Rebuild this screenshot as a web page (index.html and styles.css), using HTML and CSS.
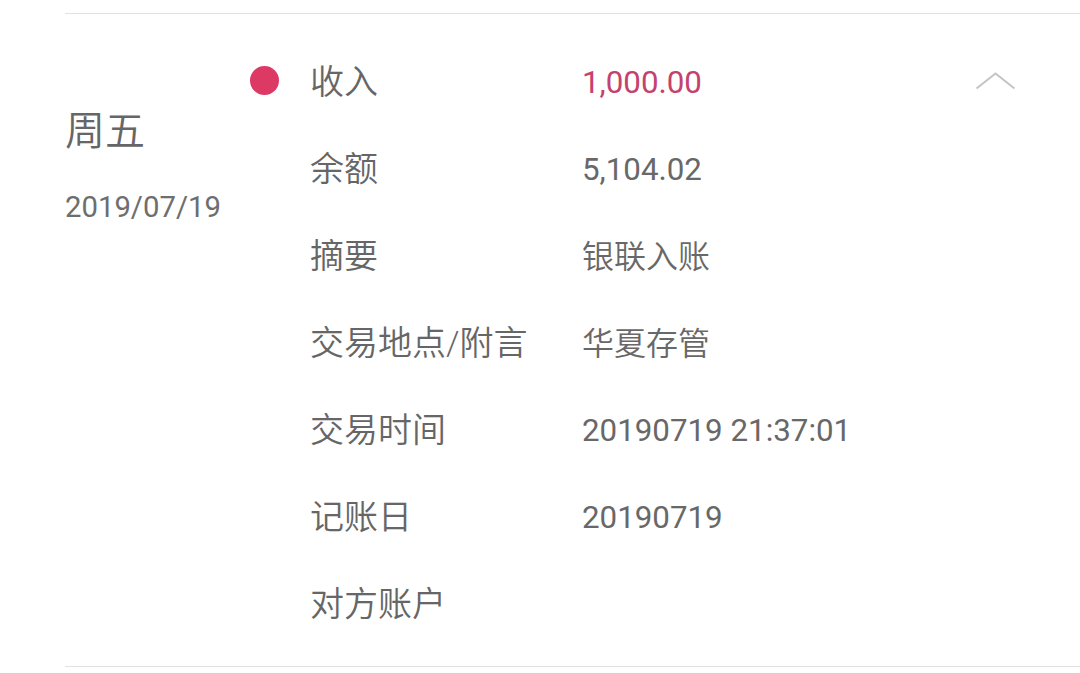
FILE: index.html
```html
<!DOCTYPE html>
<html lang="zh-CN">
<head>
<meta charset="utf-8">
<link rel="stylesheet" href="styles.css">
</head>
<body>
<div class="list">
  <div class="divider"></div>
  <div class="item">
    <div class="date-col">
      <div class="weekday">周五</div>
      <div class="date">2019/07/19</div>
    </div>
    <div class="detail">
      <div class="row">
        <span class="dot"></span>
        <span class="label">收入</span>
        <span class="value num income">1,000.00</span>
      </div>
      <div class="row">
        <span class="dot-space"></span>
        <span class="label">余额</span>
        <span class="value num">5,104.02</span>
      </div>
      <div class="row">
        <span class="dot-space"></span>
        <span class="label">摘要</span>
        <span class="value">银联入账</span>
      </div>
      <div class="row">
        <span class="dot-space"></span>
        <span class="label">交易地点/附言</span>
        <span class="value">华夏存管</span>
      </div>
      <div class="row">
        <span class="dot-space"></span>
        <span class="label">交易时间</span>
        <span class="value num">20190719 21:37:01</span>
      </div>
      <div class="row">
        <span class="dot-space"></span>
        <span class="label">记账日</span>
        <span class="value num">20190719</span>
      </div>
      <div class="row">
        <span class="dot-space"></span>
        <span class="label">对方账户</span>
        <span class="value"></span>
      </div>
    </div>
    <div class="chevron">
      <svg width="41" height="18" viewBox="0 0 41 18" aria-hidden="true">
        <polyline points="1.5,16.5 20.5,1.5 39.5,16.5" fill="none" stroke="#c4c4c4" stroke-width="2"/>
      </svg>
    </div>
  </div>
  <div class="divider bottom"></div>
</div>
</body>
</html>
```

FILE: styles.css
```css
html, body {
  margin: 0;
  padding: 0;
  background: #ffffff;
}

body {
  font-family: Roboto, "Noto Sans CJK SC", sans-serif;
  font-weight: 350;
  color: #666666;
  width: 1080px;
  height: 673px;
  overflow: hidden;
}

.list {
  padding-left: 65px;
  padding-top: 13px;
}

.divider {
  height: 1px;
  background: #e2e2e2;
}

.item {
  display: flex;
  padding-top: 22px;
  padding-bottom: 21px;
}

.date-col {
  width: 185px;
  flex: none;
}

.weekday {
  margin-top: 76px;
  font-size: 40px;
  line-height: 40px;
  color: #666666;
}

.date {
  margin-top: 40px;
  font-size: 29.3px;
  font-weight: 400;
  line-height: 30px;
  color: #6e6e6e;
}

.detail {
  flex: 1;
  display: flex;
  flex-direction: column;
}

.row {
  height: 87px;
  display: flex;
  align-items: center;
  font-size: 32px;
}

.dot, .dot-space {
  width: 29px;
  height: 29px;
  margin-right: 31px;
  flex: none;
}

.dot {
  border-radius: 50%;
  background: #dc3964;
  margin-top: 2px;
}

.label {
  width: 272px;
  flex: none;
  font-size: 34px;
  color: #666666;
}

.value {
  color: #686868;
}

.value.num {
  font-weight: 400;
  font-size: 31.3px;
  padding-top: 5px;
}

.value.income {
  color: #c4426d;
}

.chevron {
  flex: none;
  width: 41px;
  margin-right: 64px;
  padding-top: 36px;
}

.chevron svg {
  display: block;
}
```
